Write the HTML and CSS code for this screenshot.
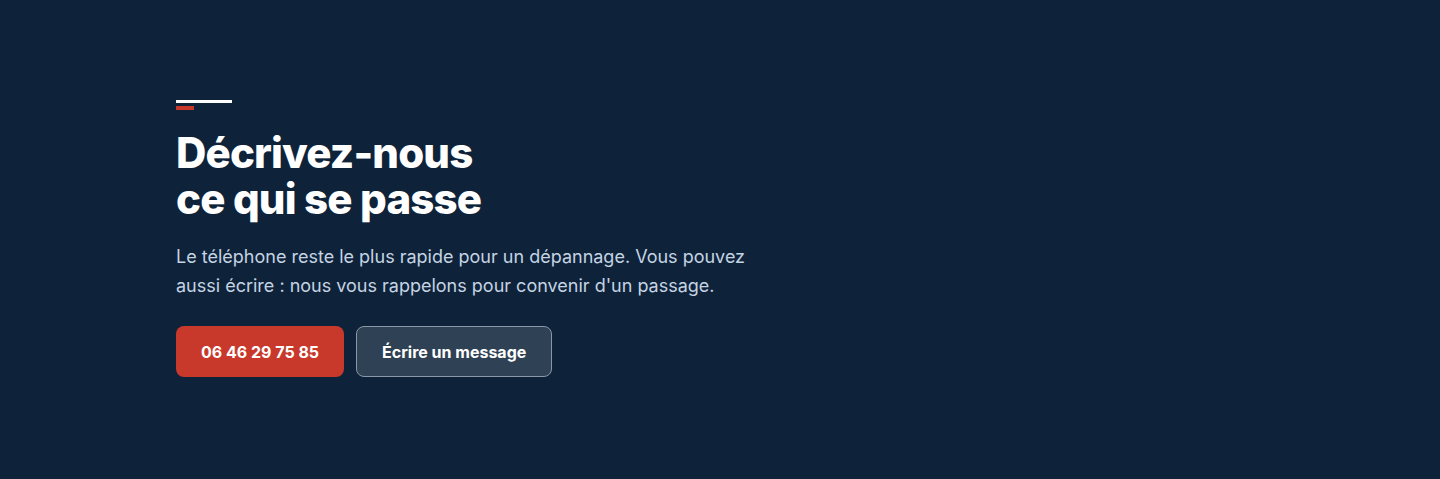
FILE: index.html
```html
<!DOCTYPE html>
<html lang="fr">
<head>
    <meta charset="UTF-8">
    <meta name="viewport" content="width=device-width, initial-scale=1.0">
    <title>Contact</title>
    <link rel="stylesheet" href="styles.css">
</head>
<body>
<section class="contact">
    <div class="contact-inner">
        <!-- Accent bars -->
        <div class="accent">
            <span class="accent-line"></span>
            <span class="accent-mark"></span>
        </div>

        <h2 class="contact-title">Décrivez-nous<br>ce qui se passe</h2>
        <p class="contact-text">Le téléphone reste le plus rapide pour un dépannage. Vous pouvez aussi écrire : nous vous rappelons pour convenir d'un passage.</p>

        <div class="actions">
            <a class="btn btn-call" href="tel:0646297585">06 46 29 75 85</a>
            <a class="btn btn-ghost" href="#message">Écrire un message</a>
        </div>
    </div>
</section>
</body>
</html>
```

FILE: styles.css
```css
/* Global styles */
* {
    margin: 0;
    padding: 0;
    box-sizing: border-box;
}

body {
    font-family: Inter, "Noto Sans", sans-serif;
    background-color: #0e233a;
    color: white;
}

.contact {
    min-height: 479px;
    padding: 100px 176px 0;
}

.contact-inner {
    display: flex;
    flex-direction: column;
    align-items: flex-start;
}

/* Accent bars */
.accent {
    display: flex;
    flex-direction: column;
    gap: 3px;
    margin-bottom: 20px;
}

.accent-line {
    display: block;
    width: 56px;
    height: 3px;
    background-color: #ffffff;
}

.accent-mark {
    display: block;
    width: 18px;
    height: 4px;
    background-color: #c8392b;
}

/* Title */
.contact-title {
    font-size: 42px;
    font-weight: 800;
    line-height: 46px;
    letter-spacing: -0.02em;
    margin-bottom: 20px;
}

.contact-text {
    max-width: 600px;
    font-size: 18px;
    line-height: 29px;
    color: #c5d3e3;
    margin-bottom: 26px;
}

/* Buttons */
.actions {
    display: flex;
    gap: 12px;
}

.btn {
    display: inline-flex;
    align-items: center;
    justify-content: center;
    height: 51px;
    padding: 0 25px;
    border-radius: 8px;
    font-size: 16px;
    font-weight: 700;
    color: white;
    text-decoration: none;
}

.btn-call {
    background-color: #c8392b;
}

.btn-ghost {
    background-color: #2f4155;
    border: 1px solid #8a97a6;
}
```
